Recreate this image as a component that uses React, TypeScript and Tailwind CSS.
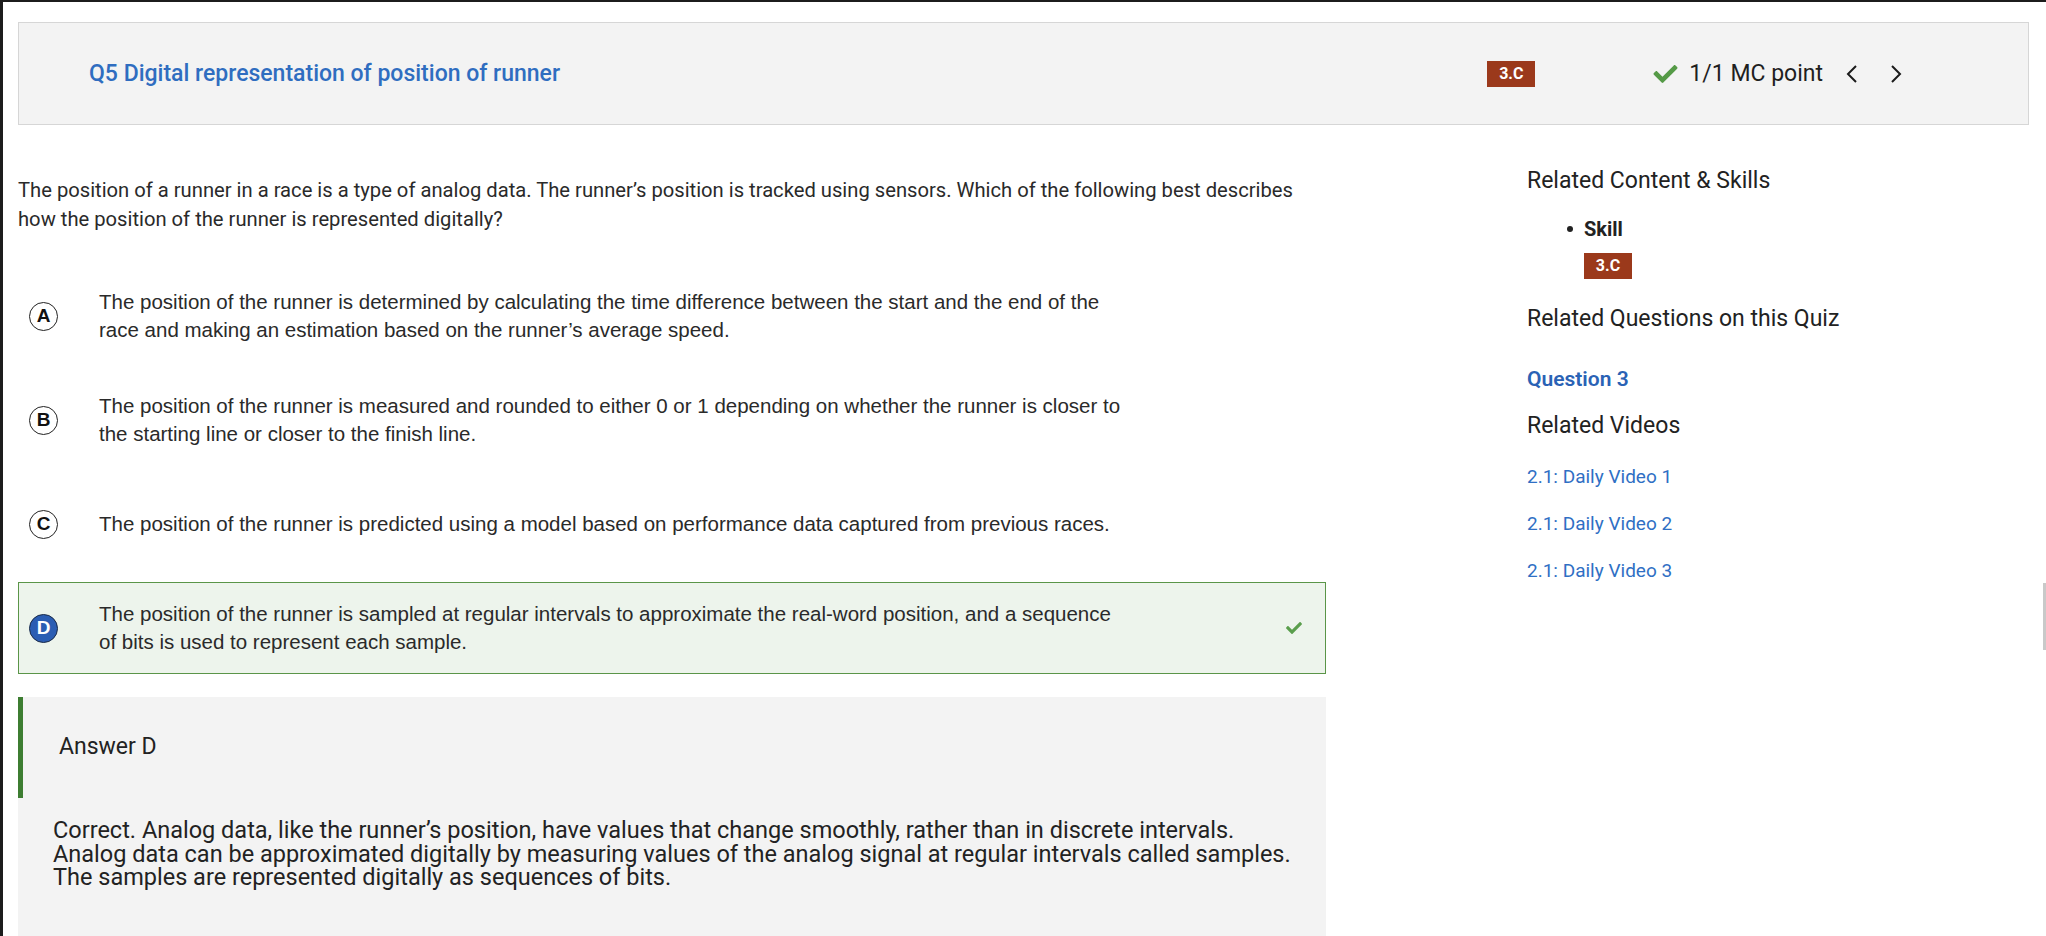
import React from "react";

const roboto = { fontFamily: "Roboto, 'Liberation Sans', sans-serif" };

const options = [
  {
    letter: "A",
    text: "The position of the runner is determined by calculating the time difference between the start and the end of the race and making an estimation based on the runner’s average speed.",
  },
  {
    letter: "B",
    text: "The position of the runner is measured and rounded to either 0 or 1 depending on whether the runner is closer to the starting line or closer to the finish line.",
  },
  {
    letter: "C",
    text: "The position of the runner is predicted using a model based on performance data captured from previous races.",
  },
  {
    letter: "D",
    text: "The position of the runner is sampled at regular intervals to approximate the real-word position, and a sequence of bits is used to represent each sample.",
    correct: true,
  },
];

function Check({ className }: { className?: string }) {
  return (
    <svg viewBox="0 0 512 512" className={className} fill="currentColor">
      <path d="M173.898 439.404l-166.4-166.4c-9.997-9.997-9.997-26.206 0-36.204l36.203-36.204c9.997-9.998 26.207-9.998 36.204 0L192 312.69 432.095 72.596c9.997-9.997 26.207-9.997 36.204 0l36.203 36.204c9.997 9.997 9.997 26.206 0 36.204l-294.4 294.401c-9.998 9.997-26.207 9.997-36.204-.001z" />
    </svg>
  );
}

function Chevron({ dir }: { dir: "left" | "right" }) {
  return (
    <svg viewBox="0 0 14 18" className="w-[14px] h-[18px]" fill="none" stroke="#1a1a1a" strokeWidth="2">
      {dir === "left" ? <polyline points="11,1 3,9 11,17" /> : <polyline points="3,1 11,9 3,17" />}
    </svg>
  );
}

function Badge({ children }: { children: React.ReactNode }) {
  return (
    <span className="inline-flex items-center justify-center h-[26px] w-[48px] bg-[#9b391b] text-white text-[16px] font-bold leading-none">
      {children}
    </span>
  );
}

export default function App() {
  return (
    <div className="relative h-[936px] w-full overflow-hidden bg-white border-t-2 border-l-[3px] border-[#1c1c1c] text-[#222]" style={roboto}>
      <div className="pl-[15px] pr-[17px] pt-[20px]">
        {/* Header */}
        <div className="flex items-center h-[103px] border border-[#d6d6d6] bg-[#f3f3f3] pl-[70px] pr-[125px]">
          <h1 className="text-[23px] font-medium text-[#2f6dc0] leading-none">Q5 Digital representation of position of runner</h1>
          <div className="ml-auto flex items-center">
            <Badge>3.C</Badge>
            <Check className="ml-[116px] w-[29px] h-[24px] text-[#559a47]" />
            <span className="ml-[9px] text-[23px] text-[#1f1f1f] leading-none">1/1 MC point</span>
            <span className="ml-[22px] flex"><Chevron dir="left" /></span>
            <span className="ml-[30px] flex"><Chevron dir="right" /></span>
          </div>
        </div>

        <div className="flex">
          {/* Main column */}
          <div className="w-[1308px] shrink-0">
            <p className="mt-[51px] pr-[10px] text-[20.2px] leading-[29px] text-[#2a2a2a]">
              The position of a runner in a race is a type of analog data. The runner’s position is tracked using sensors. Which of the following best describes how the position of the runner is represented digitally?
            </p>

            <div className="mt-[36px] flex flex-col gap-[12px]" style={{ fontFamily: "'Liberation Sans', Arial, sans-serif" }}>
              {options.map((o) => (
                <div
                  key={o.letter}
                  className={
                    o.correct
                      ? "flex items-center h-[92px] border border-[#5a9548] bg-[#edf4ec] pl-[10px] pr-[22px]"
                      : "flex items-center h-[92px] border border-transparent pl-[10px] pr-[22px]"
                  }
                >
                  <span
                    className={
                      o.correct
                        ? "flex items-center justify-center w-[29px] h-[29px] rounded-full border-[1.5px] border-[#1b2b48] bg-[#2b5db3] text-white text-[19px] font-bold shrink-0"
                        : "flex items-center justify-center w-[29px] h-[29px] rounded-full border-[1.5px] border-[#222] bg-white text-[#111] text-[19px] font-bold shrink-0"
                    }
                  >
                    {o.letter}
                  </span>
                  <p className="ml-[41px] w-[1024px] text-[20.5px] leading-[28px] text-[#2a2a2a]">{o.text}</p>
                  {o.correct && <Check className="ml-auto w-[18px] h-[16px] text-[#5a9e4c]" />}
                </div>
              ))}
            </div>

            {/* Answer */}
            <div className="mt-[23px] bg-[#f3f3f3] pb-[80px]">
              <div className="flex items-center h-[101px] border-l-[5px] border-[#3d7d31] pl-[36px] text-[23px]">Answer D</div>
              <div className="pt-[21px] pl-[35px] text-[23.5px] leading-[23.5px] text-[#222]">
                <p>Correct. Analog data, like the runner’s position, have values that change smoothly, rather than in discrete intervals.</p>
                <p>Analog data can be approximated digitally by measuring values of the analog signal at regular intervals called samples.</p>
                <p>The samples are represented digitally as sequences of bits.</p>
              </div>
            </div>
          </div>

          {/* Sidebar */}
          <aside className="ml-[201px] flex flex-col items-start">
            <h3 className="mt-[44px] text-[23px] leading-[24px]">Related Content &amp; Skills</h3>
            <div className="mt-[25px] ml-[40px] flex items-center">
              <span className="w-[6px] h-[6px] rounded-full bg-[#222]" />
              <span className="ml-[11px] text-[20px] font-bold leading-[22px]">Skill</span>
            </div>
            <div className="mt-[13px] ml-[57px]">
              <Badge>3.C</Badge>
            </div>
            <h3 className="mt-[28px] text-[23px] leading-[24px]">Related Questions on this Quiz</h3>
            <a className="mt-[37px] text-[21px] font-semibold leading-[22px] text-[#2a62b5]">Question 3</a>
            <h3 className="mt-[24px] text-[23px] leading-[24px]">Related Videos</h3>
            <a className="mt-[28px] text-[19px] leading-[22px] text-[#2f6fc4]">2.1: Daily Video 1</a>
            <a className="mt-[25px] text-[19px] leading-[22px] text-[#2f6fc4]">2.1: Daily Video 2</a>
            <a className="mt-[25px] text-[19px] leading-[22px] text-[#2f6fc4]">2.1: Daily Video 3</a>
          </aside>
        </div>
      </div>

      {/* scrollbar thumb */}
      <div className="absolute right-0 top-[581px] w-[3px] h-[67px] bg-[#c9c9c9]" />
    </div>
  );
}
